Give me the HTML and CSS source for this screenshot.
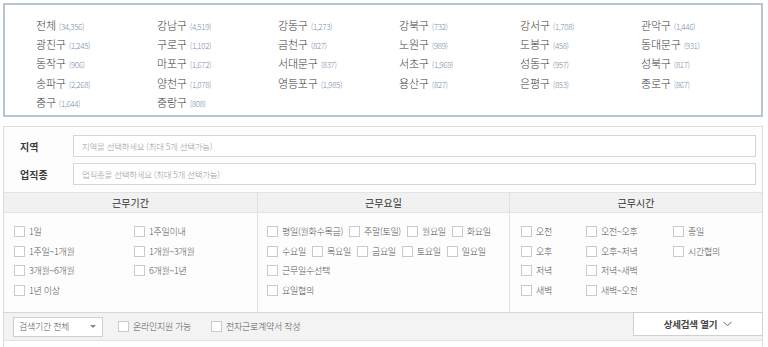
FILE: index.html
```html
<!DOCTYPE html>
<html lang="ko">
<head>
<meta charset="utf-8">
<title>지역 검색</title>
<link rel="stylesheet" href="styles.css">
</head>
<body>
<div class="districts">
  <div class="d"><span class="n">전체</span><span class="c">(34,356)</span></div>
  <div class="d"><span class="n">강남구</span><span class="c">(4,519)</span></div>
  <div class="d"><span class="n">강동구</span><span class="c">(1,273)</span></div>
  <div class="d"><span class="n">강북구</span><span class="c">(732)</span></div>
  <div class="d"><span class="n">강서구</span><span class="c">(1,708)</span></div>
  <div class="d"><span class="n">관악구</span><span class="c">(1,446)</span></div>
  <div class="d"><span class="n">광진구</span><span class="c">(1,245)</span></div>
  <div class="d"><span class="n">구로구</span><span class="c">(1,102)</span></div>
  <div class="d"><span class="n">금천구</span><span class="c">(827)</span></div>
  <div class="d"><span class="n">노원구</span><span class="c">(989)</span></div>
  <div class="d"><span class="n">도봉구</span><span class="c">(458)</span></div>
  <div class="d"><span class="n">동대문구</span><span class="c">(931)</span></div>
  <div class="d"><span class="n">동작구</span><span class="c">(906)</span></div>
  <div class="d"><span class="n">마포구</span><span class="c">(1,672)</span></div>
  <div class="d"><span class="n">서대문구</span><span class="c">(837)</span></div>
  <div class="d"><span class="n">서초구</span><span class="c">(1,969)</span></div>
  <div class="d"><span class="n">성동구</span><span class="c">(957)</span></div>
  <div class="d"><span class="n">성북구</span><span class="c">(817)</span></div>
  <div class="d"><span class="n">송파구</span><span class="c">(2,268)</span></div>
  <div class="d"><span class="n">양천구</span><span class="c">(1,078)</span></div>
  <div class="d"><span class="n">영등포구</span><span class="c">(1,985)</span></div>
  <div class="d"><span class="n">용산구</span><span class="c">(827)</span></div>
  <div class="d"><span class="n">은평구</span><span class="c">(853)</span></div>
  <div class="d"><span class="n">종로구</span><span class="c">(867)</span></div>
  <div class="d"><span class="n">중구</span><span class="c">(1,644)</span></div>
  <div class="d"><span class="n">중랑구</span><span class="c">(808)</span></div>
</div>

<div class="filter">
  <div class="fields">
    <div class="field"><span class="flabel">지역</span><div class="input">지역을 선택하세요 (최대 5개 선택가능)</div></div>
    <div class="field"><span class="flabel">업직종</span><div class="input">업직종을 선택하세요 (최대 5개 선택가능)</div></div>
  </div>

  <div class="cols">
    <div class="col">
      <div class="head">근무기간</div>
      <div class="body grid-period">
        <label class="chk"><i></i>1일</label>
        <label class="chk"><i></i>1주일이내</label>
        <label class="chk"><i></i>1주일~1개월</label>
        <label class="chk"><i></i>1개월~3개월</label>
        <label class="chk"><i></i>3개월~6개월</label>
        <label class="chk"><i></i>6개월~1년</label>
        <label class="chk"><i></i>1년 이상</label>
      </div>
    </div>
    <div class="col">
      <div class="head">근무요일</div>
      <div class="body days">
        <div class="row">
          <label class="chk"><i></i>평일(월화수목금)</label>
          <label class="chk"><i></i>주말(토일)</label>
          <label class="chk"><i></i>월요일</label>
          <label class="chk"><i></i>화요일</label>
        </div>
        <div class="row">
          <label class="chk"><i></i>수요일</label>
          <label class="chk"><i></i>목요일</label>
          <label class="chk"><i></i>금요일</label>
          <label class="chk"><i></i>토요일</label>
          <label class="chk"><i></i>일요일</label>
        </div>
        <div class="row"><label class="chk"><i></i>근무일수선택</label></div>
        <div class="row"><label class="chk"><i></i>요일협의</label></div>
      </div>
    </div>
    <div class="col">
      <div class="head">근무시간</div>
      <div class="body grid-time">
        <label class="chk"><i></i>오전</label>
        <label class="chk"><i></i>오전~오후</label>
        <label class="chk"><i></i>종일</label>
        <label class="chk"><i></i>오후</label>
        <label class="chk"><i></i>오후~저녁</label>
        <label class="chk"><i></i>시간협의</label>
        <label class="chk"><i></i>저녁</label>
        <label class="chk"><i></i>저녁~새벽</label>
        <span></span>
        <label class="chk"><i></i>새벽</label>
        <label class="chk"><i></i>새벽~오전</label>
      </div>
    </div>
  </div>

  <div class="bar">
    <div class="select">검색기간 전체<span class="caret"></span></div>
    <label class="chk first"><i></i>온라인지원 가능</label>
    <label class="chk second"><i></i>전자근로계약서 작성</label>
    <div class="more">상세검색 열기<svg width="9" height="6" viewBox="0 0 9 6"><path d="M0.5 0.8 L4.5 4.8 L8.5 0.8" fill="none" stroke="#666" stroke-width="1"/></svg></div>
  </div>
  <div class="rest"></div>
</div>
</body>
</html>
```

FILE: styles.css
```css
* { box-sizing: border-box; }
body {
  margin: 0;
  background: #fff;
  font-family: "Noto Sans CJK KR", "Noto Sans", sans-serif;
  color: #333;
  overflow: hidden;
}

.districts {
  margin: 3px 0 0 3px;
  width: 760px;
  height: 114px;
  border: 2px solid #b9c6d2;
  padding: 8px 0 0 31px;
  display: grid;
  grid-template-columns: repeat(6, 121px);
  grid-auto-rows: 19.3px;
  align-items: center;
}
.d { white-space: nowrap; line-height: 1; }
.n { font-size: 11px; font-weight: 300; color: #3c3c3c; letter-spacing: -0.2px; }
.c { font-size: 8px; font-weight: 300; color: #7d92ad; margin-left: 3px; letter-spacing: -0.4px; }

.filter {
  margin: 9px 0 0 3px;
  width: 760px;
  border: 1px solid #dcdcdc;
  border-bottom: none;
  background: #fdfdfd;
}
.fields {
  padding: 8px 6px 0 16px;
  display: flex;
  flex-direction: column;
  gap: 6px;
}
.field { display: flex; align-items: center; height: 22px; }
.flabel { width: 53px; font-size: 10px; font-weight: 700; color: #3a3a3a; }
.input {
  flex: 1;
  height: 22px;
  border: 1px solid #d6d6d6;
  background: #fff;
  font-size: 8.5px;
  font-weight: 300;
  color: #9a9a9a;
  padding-left: 8px;
  display: flex;
  align-items: center;
  letter-spacing: -0.3px;
}

.cols {
  margin-top: 7px;
  display: grid;
  grid-template-columns: 253px 252px 253px;
}
.col + .col { border-left: 1px solid #e0e0e0; }
.head {
  height: 21px;
  background: #f1f1f1;
  border-top: 1px solid #e3e3e3;
  border-bottom: 1px solid #e3e3e3;
  font-size: 10px;
  font-weight: 400;
  color: #333;
  display: flex;
  align-items: center;
  justify-content: center;
}
.body { height: 99px; padding-top: 9px; }

.chk {
  display: flex;
  align-items: center;
  font-size: 9px;
  font-weight: 300;
  color: #555;
  white-space: nowrap;
  height: 19.6px;
  letter-spacing: -0.3px;
}
.chk i {
  display: inline-block;
  width: 11px;
  height: 11px;
  border: 1px solid #cacaca;
  background: #fff;
  margin-right: 4px;
  flex: none;
}

.grid-period {
  padding-left: 10px;
  display: grid;
  grid-template-columns: 120px 1fr;
  grid-auto-rows: 19.6px;
}
.days { padding-left: 9px; }
.days .row { display: flex; gap: 6px; height: 19.6px; }
.grid-time {
  padding-left: 11px;
  display: grid;
  grid-template-columns: 65px 87px 1fr;
  grid-auto-rows: 19.6px;
}

.bar {
  height: 29px;
  background: #f3f3f3;
  border-top: 1px solid #d6d6d6;
  border-bottom: 1px solid #e2e2e2;
  display: flex;
  align-items: center;
  padding-left: 9px;
}
.select {
  width: 90px;
  height: 20px;
  border: 1px solid #cfcfcf;
  background: #fff;
  font-size: 9px;
  font-weight: 300;
  color: #555;
  padding-left: 5px;
  display: flex;
  align-items: center;
  letter-spacing: -0.3px;
}
.caret {
  margin-left: auto;
  margin-right: 6px;
  width: 0;
  height: 0;
  border-left: 3px solid transparent;
  border-right: 3px solid transparent;
  border-top: 3px solid #888;
}
.bar .chk.first { margin-left: 15px; }
.bar .chk.second { margin-left: 20px; }
.more {
  margin-left: auto;
  margin-right: -1px;
  align-self: flex-start;
  margin-top: -1px;
  width: 130px;
  height: 24px;
  background: #fff;
  border: 1px solid #d0d0d0;
  font-size: 9.5px;
  font-weight: 700;
  color: #444;
  display: flex;
  align-items: center;
  justify-content: center;
  gap: 6px;
  letter-spacing: -0.2px;
}
.rest { height: 40px; background: #fff; }
```
